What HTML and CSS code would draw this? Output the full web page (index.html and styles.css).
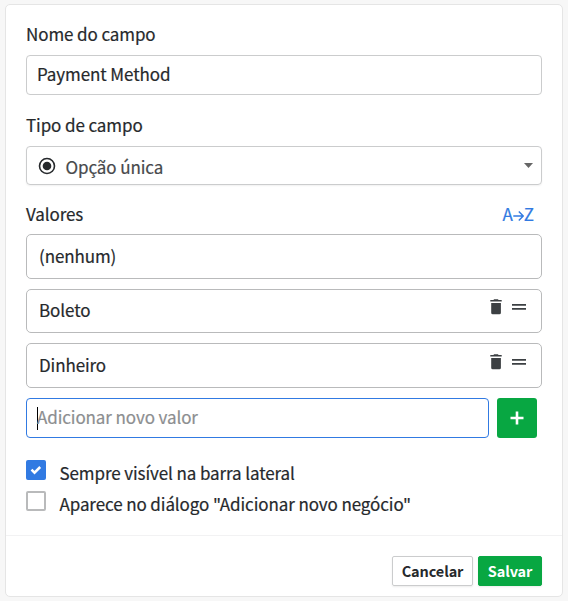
FILE: index.html
```html
<!DOCTYPE html>
<html lang="pt-BR">
<head>
<meta charset="utf-8">
<title>Campo personalizado</title>
<link rel="stylesheet" href="styles.css">
</head>
<body>
<svg width="0" height="0" class="defs">
  <symbol id="trash" viewBox="0 0 12 16"><path d="M3.500.9 4 .3h4l.5.6h3.200v1.700H.3V.9zM1.200 3.900h9.700v9.900a1.500 1.500 0 0 1-1.500 1.500h-6.700a1.500 1.500 0 0 1-1.500-1.500z"/></symbol>
  <symbol id="handle" viewBox="0 0 14 6"><path d="M0 0h14v1.700H0zM0 4h14v1.700H0z"/></symbol>
</svg>
<main class="card">
  <div class="body">
    <div class="label">Nome do campo</div>
    <div class="input"><span class="input-text">Payment Method</span></div>
    <div class="label label-type">Tipo de campo</div>
    <div class="input select">
      <svg class="radio" viewBox="0 0 18 18"><circle cx="9" cy="9" r="7.500" fill="none" stroke="#26292c" stroke-width="1.600"/><circle cx="9" cy="9" r="4.300" fill="#26292c"/></svg>
      <span class="select-text">Opção única</span>
      <svg class="arrow" viewBox="0 0 9 5"><path d="M0 0h9L4.500 5z" fill="#666"/></svg>
    </div>
    <div class="values-head">
      <span>Valores</span>
      <span class="sort">A<svg class="sort-arrow" viewBox="0 0 11 10"><path d="M.3 5h9.700M5.800.6 10.200 5 5.800 9.400" fill="none" stroke="#317ae2" stroke-width="1.400"/></svg>Z</span>
    </div>
    <div class="values">
      <div class="value">(nenhum)</div>
      <div class="value value-short"><span>Boleto</span><span class="tools"><svg class="trash"><use href="#trash"/></svg><svg class="handle"><use href="#handle"/></svg></span></div>
      <div class="value value-last"><span>Dinheiro</span><span class="tools"><svg class="trash"><use href="#trash"/></svg><svg class="handle"><use href="#handle"/></svg></span></div>
    </div>
    <div class="add">
      <div class="input add-input"><span class="caret"></span><span class="placeholder input-text">Adicionar novo valor</span></div>
      <div class="plus"><svg viewBox="0 0 14 14"><path d="M7 .5v13M.5 7h13" stroke="#fff" stroke-width="2.600"/></svg></div>
    </div>
    <div class="checks">
      <div class="check"><span class="box box-on"><svg viewBox="0 0 12 10"><path d="M1.500 4.700 4.500 7.700 10.200 2" fill="none" stroke="#fff" stroke-width="2.500"/></svg></span><span class="check-text">Sempre visível na barra lateral</span></div>
      <div class="check"><span class="box"></span><span class="check-text">Aparece no diálogo "Adicionar novo negócio"</span></div>
    </div>
  </div>
  <div class="footer"><div class="btn">Cancelar</div><div class="btn btn-save">Salvar</div></div>
</main>
</body>
</html>
```
FILE: styles.css
```css
* { box-sizing: border-box; }
body {
  margin: 0;
  padding: 4px 5px;
  height: 601px;
  background: #f7f7f7;
  color: #26292c;
  font: 17px/24px "Noto Sans CJK SC", sans-serif;
  letter-spacing: -0.1px;
  -webkit-text-stroke: 0.2px currentColor;
  overflow: hidden;
}
svg { display: block; flex: none; }
.defs { display: none; }
.card {
  width: 558px;
  height: 593px;
  border: 1px solid #e5e5e5;
  border-radius: 5px;
  background: #fff;
  display: flex;
  flex-direction: column;
}
.body { height: 530px; padding: 17px 20px 0; }
.label { height: 33px; }
.label-type { margin-top: 18px; }
.input {
  height: 40px;
  border: 1px solid #cbcccd;
  border-radius: 4px;
  padding: 0 10px;
  display: flex;
  align-items: center;
}
.input-text { margin-bottom: 2px; }
.select { height: 39px; box-shadow: 0 1px 2px rgba(0,0,0,.06); padding: 0 8px 0 11px; }
.radio { width: 18px; height: 18px; }
.select-text { margin: 3px auto 0 9.500px; color: #47494c; }
.arrow { width: 9px; height: 5px; }
.values-head {
  display: flex;
  justify-content: space-between;
  height: 32px;
  margin: 17px 8px 0 0;
}
.sort { display: flex; align-items: center; height: 24px; color: #317ae2; }
.sort-arrow { width: 11px; height: 10px; margin-top: 3px; }
.values { display: flex; flex-direction: column; gap: 10px; }
.value {
  height: 45px;
  border: 1px solid #b9babb;
  border-radius: 5px;
  padding: 9px 15px 0 12px;
  display: flex;
  justify-content: space-between;
}
.value-short { height: 44px; padding-top: 8px; }
.tools { display: flex; gap: 10px; margin-top: 1px; }
.trash { width: 12px; height: 16px; fill: #3c4043; }
.handle { width: 14px; height: 6px; margin-top: 5px; fill: #3c4043; }
.add { display: flex; gap: 8px; margin-top: 10px; }
.add-input { width: 463px; border-color: #317ae2; }
.caret { width: 1px; height: 23px; background: #000; margin-right: -1px; }
.placeholder { color: #8c8e90; }
.plus {
  width: 40px;
  height: 40px;
  border-radius: 3px;
  background: #08a742;
  display: flex;
  align-items: center;
  justify-content: center;
}
.plus svg { width: 14px; height: 14px; }
.checks { margin-top: 22px; }
.check { display: flex; height: 31px; }
.box {
  width: 20px;
  height: 20px;
  border: 2px solid #b9babb;
  border-radius: 2px;
  display: flex;
  align-items: center;
  justify-content: center;
}
.box-on { background: #317ae2; border-color: #317ae2; }
.box svg { width: 12px; height: 10px; }
.check-text { margin: 1px 0 0 13.500px; }
.footer {
  flex: 1;
  border-top: 1px solid #f2f2f3;
  padding: 20px 20px 0;
  display: flex;
  justify-content: flex-end;
  gap: 5px;
}
.btn {
  width: 81px;
  height: 30px;
  border: 1px solid #cbcccd;
  border-radius: 2px;
  box-shadow: 0 1px 2px rgba(0,0,0,.08);
  font-size: 14.500px;
  font-weight: 700;
  line-height: 28px;
  text-align: center;
  -webkit-text-stroke: 0;
}
.btn-save { width: 64px; background: #08a742; border-color: #08a742; color: #fff; }
```
